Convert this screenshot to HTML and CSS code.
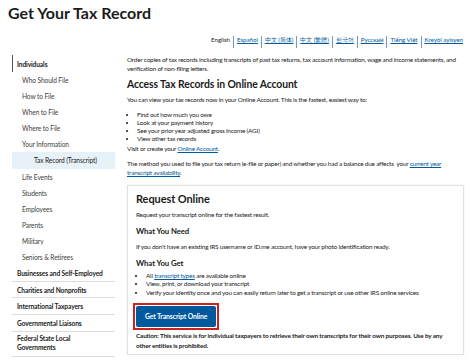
FILE: index.html
```html
<!DOCTYPE html>
<html lang="en">
<head>
<meta charset="utf-8">
<link rel="stylesheet" href="styles.css">
</head>
<body>
<header class="page-head">
  <h1 class="title">Get Your Tax Record</h1>
</header>
<nav class="langs">
  <span class="lang current">English</span>
  <a class="lang" href="#">Español</a>
  <a class="lang" href="#">中文 (简体)</a>
  <a class="lang" href="#">中文 (繁體)</a>
  <a class="lang" href="#">한국어</a>
  <a class="lang" href="#">Русский</a>
  <a class="lang" href="#">Tiếng Việt</a>
  <a class="lang" href="#">Kreyòl ayisyen</a>
</nav>
<div class="layout">
  <aside class="sidebar">
    <div class="nav-section open">Individuals</div>
    <div class="nav-item">Who Should File</div>
    <div class="nav-item">How to File</div>
    <div class="nav-item">When to File</div>
    <div class="nav-item">Where to File</div>
    <div class="nav-item">Your Information</div>
    <div class="nav-item sub active">Tax Record (Transcript)</div>
    <div class="nav-item">Life Events</div>
    <div class="nav-item">Students</div>
    <div class="nav-item">Employees</div>
    <div class="nav-item">Parents</div>
    <div class="nav-item">Military</div>
    <div class="nav-item">Seniors &amp; Retirees</div>
    <div class="nav-section">Businesses and Self-Employed</div>
    <div class="nav-section">Charities and Nonprofits</div>
    <div class="nav-section">International Taxpayers</div>
    <div class="nav-section">Governmental Liaisons</div>
    <div class="nav-section">Federal State Local Governments</div>
  </aside>
  <main class="main">
    <p class="intro">Order copies of tax records including transcripts of past tax returns, tax account information, wage and income statements, and verification of non-filing letters.</p>
    <h2 class="h2">Access Tax Records in Online Account</h2>
    <p class="p">You can view your tax records now in your Online Account. This is the fastest, easiest way to:</p>
    <ul class="list">
      <li>Find out how much you owe</li>
      <li>Look at your payment history</li>
      <li>See your prior year adjusted gross income (AGI)</li>
      <li>View other tax records</li>
    </ul>
    <p class="p visit">Visit or create your <a href="#">Online Account</a>.</p>
    <p class="p method">The method you used to file your tax return (e-file or paper) and whether you had a balance due affects &nbsp;your <a href="#">current year<br>transcript availability</a>.</p>
    <section class="card">
      <h3 class="card-title">Request Online</h3>
      <p class="p">Request your transcript online for the fastest result.</p>
      <h4 class="h4 need-h">What You Need</h4>
      <p class="p need">If you don't have an existing IRS username or ID.me account, have your photo identification ready.</p>
      <h4 class="h4">What You Get</h4>
      <ul class="list">
        <li>All <a href="#">transcript types</a> are available online</li>
        <li>View, print, or download your transcript</li>
        <li>Verify your identity once and you can easily return later to get a transcript or use other IRS online services</li>
      </ul>
      <div class="btn-wrap"><a class="btn" href="#">Get Transcript Online</a></div>
      <p class="caution">Caution: This service is for individual taxpayers to retrieve their own transcripts for their own purposes. Use by any other entities is prohibited.</p>
    </section>
  </main>
</div>
</body>
</html>
```
FILE: styles.css
```css
* { box-sizing: border-box; }
html, body { margin: 0; padding: 0; background: #fff; }
body {
  font-family: "Lato", "Noto Sans", sans-serif;
  color: #1b1b1b;
  width: 474px;
  height: 360px;
  overflow: hidden;
}
a { color: #00599c; text-decoration: underline; }
.page-head { padding: 3px 8px 0; height: 28px; }
.title {
  margin: 0;
  font-size: 16px;
  font-weight: 700;
  line-height: 20px;
  letter-spacing: 0;
}
.langs {
  display: flex;
  justify-content: flex-end;
  padding: 8px 8px 0 0;
  font-size: 6.2px;
  line-height: 8px;
  height: 20px;
  letter-spacing: -0.05px;
}
.lang { padding: 0 3px; border-left: 1px solid #6b9ccc; }
.lang:first-child { border-left: 0; color: #1b1b1b; }
.layout { display: flex; gap: 12px; padding-left: 12px; }
.sidebar { width: 103px; flex: none; font-size: 6.6px; letter-spacing: -0.1px; }
.nav-section {
  font-weight: 700;
  line-height: 8px;
  padding: 3.8px 9px 3.8px 5px;
  border-bottom: 1px solid #dcdcdc;
}
.nav-section:last-child { line-height: 9.5px; padding-top: 2px; }
.nav-section.open {
  border-bottom: 0;
  border-left: 1.5px solid #555;
  padding: 5px 0 4px 4px;
  margin-top: 7px;
  min-height: 17px;
}
.nav-item {
  line-height: 8px;
  padding: 4px 0 4px 10px;
  color: #3d3d3d;
  height: 16.1px;
}
.nav-item.active { background: #e7f1f8; padding-left: 22px; color: #1b1b1b; }
.main {
  width: 337px;
  font-size: 6.4px;
  letter-spacing: -0.2px;
  line-height: 8.5px;
  padding-top: 7px;
}
.p, .intro { margin: 0 0 6px; }
.intro { line-height: 9px; margin-bottom: 5px; }
.h2 { margin: 0 0 6px; font-size: 10.4px; line-height: 12px; font-weight: 700; letter-spacing: -0.1px; }
.list { margin: 0 0 1px; padding-left: 10px; line-height: 8.3px; }
.visit { margin-bottom: 6px; }
.method { line-height: 9px; margin-bottom: 8px; }
.card {
  border: 1px solid #dfe1e2;
  box-shadow: 0 0 2px rgba(0,0,0,0.08);
  padding: 6px 8px 3px 8px;
}
.card-title { margin: 0 0 5px; font-size: 11px; line-height: 14px; font-weight: 700; letter-spacing: -0.1px; }
.h4 { margin: 0 0 4px; font-size: 7.8px; line-height: 10px; font-weight: 700; letter-spacing: -0.1px; }
.h4.need-h { margin-bottom: 7px; }
.need { margin-bottom: 7px; }
.card .list { margin-bottom: 0; }
.btn-wrap {
  display: inline-block;
  border: 2px solid #c9231c;
  padding: 1px;
  margin: 6px 0 1px -3px;
}
.btn {
  display: block;
  background: #00599c;
  color: #fff;
  text-decoration: none;
  font-weight: 700;
  font-size: 6.8px;
  letter-spacing: -0.1px;
  line-height: 21px;
  padding: 0 9px;
  border-radius: 2px;
}
.caution { margin: 0; font-weight: 700; font-size: 6.4px; line-height: 10px; letter-spacing: -0.15px; }
```
